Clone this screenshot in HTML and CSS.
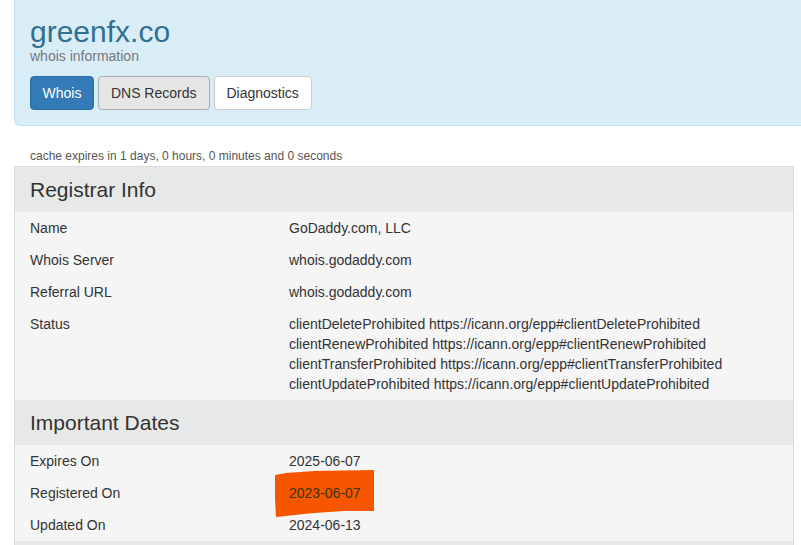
FILE: index.html
```html
<!DOCTYPE html>
<html lang="en">
<head>
<meta charset="UTF-8">
<meta name="viewport" content="width=device-width, initial-scale=1.0">
<title>greenfx.co - whois information</title>
<link rel="stylesheet" href="styles.css">
</head>
<body>

<div class="page">
  <div class="jumbotron">
    <h1>greenfx.co</h1>
    <p class="subtitle">whois information</p>
    <div class="tabs">
      <a class="btn btn-primary" href="#">Whois</a>
      <a class="btn btn-active" href="#">DNS Records</a>
      <a class="btn" href="#">Diagnostics</a>
    </div>
  </div>

  <p class="cache">cache expires in 1 days, 0 hours, 0 minutes and 0 seconds</p>

  <div class="whois">
    <div class="section">Registrar Info</div>
    <div class="row">
      <div class="label">Name</div>
      <div class="value">GoDaddy.com, LLC</div>
    </div>
    <div class="row">
      <div class="label">Whois Server</div>
      <div class="value">whois.godaddy.com</div>
    </div>
    <div class="row">
      <div class="label">Referral URL</div>
      <div class="value">whois.godaddy.com</div>
    </div>
    <div class="row">
      <div class="label">Status</div>
      <div class="value">
        clientDeleteProhibited https://icann.org/epp#clientDeleteProhibited<br>
        clientRenewProhibited https://icann.org/epp#clientRenewProhibited<br>
        clientTransferProhibited https://icann.org/epp#clientTransferProhibited<br>
        clientUpdateProhibited https://icann.org/epp#clientUpdateProhibited
      </div>
    </div>

    <div class="section">Important Dates</div>
    <div class="row">
      <div class="label">Expires On</div>
      <div class="value">2025-06-07</div>
    </div>
    <div class="row">
      <div class="label">Registered On</div>
      <div class="value marked">
        <!-- hand drawn marker over the date -->
        <svg class="marker" width="102" height="50" viewBox="0 0 102 50">
          <polygon points="1,6 12,4 40,2 100,1 100,42 70,42 40,44 2,48 1,30" fill="#f75500"/>
        </svg>
        <span>2023-06-07</span>
      </div>
    </div>
    <div class="row">
      <div class="label">Updated On</div>
      <div class="value">2024-06-13</div>
    </div>

    <div class="section section-next"></div>
  </div>
</div>

</body>
</html>
```

FILE: styles.css
```css
/* General styles */
body {
  font-family: "Liberation Sans", Arial, sans-serif;
  font-size: 14px;
  line-height: 20px;
  color: #333;
  background-color: #fff;
  margin: 0;
  padding: 0;
  overflow: hidden;
}

.page {
  padding-left: 14px;
}

/* Header */
.jumbotron {
  margin-right: -30px;
  padding: 17px 15px 15px;
  background-color: #d9edf7;
  border: 1px solid #c4e3f1;
  border-top: none;
  border-radius: 0 0 0 6px;
}

h1 {
  margin: 0;
  font-size: 30px;
  line-height: 29px;
  font-weight: normal;
  color: #31708f;
}

.subtitle {
  margin: 0;
  color: #777;
}

.tabs {
  display: flex;
  gap: 4px;
  margin-top: 10px;
}

.btn {
  display: inline-block;
  padding: 6px 12px;
  border: 1px solid #ccc;
  border-radius: 4px;
  background-color: #fff;
  color: #333;
  text-decoration: none;
}

.btn-primary {
  padding: 6px 11.5px;
  background-color: #337ab7;
  border-color: #2e6da4;
  color: #fff;
}

.btn-active {
  background-color: #e6e6e6;
  border-color: #adadad;
}

.cache {
  margin: 22px 0 1px 16px;
  font-size: 12px;
  line-height: 17px;
  color: #555;
}

/* Whois table */
.whois {
  width: 778px;
  border: 1px solid #dcdcdc;
  border-bottom: none;
  background-color: #f5f5f5;
}

.section {
  padding: 10px 15px 9px;
  font-size: 21px;
  line-height: 26px;
  background-color: #e7e8e8;
}

.section-next {
  height: 26px;
}

.row {
  display: grid;
  grid-template-columns: 259px 1fr;
}

.label,
.value {
  padding: 6px 15px;
}

.marked {
  position: relative;
}

.marked span {
  position: relative;
  color: #3b3410;
}

.marker {
  position: absolute;
  left: 0;
  top: -8px;
}
```
